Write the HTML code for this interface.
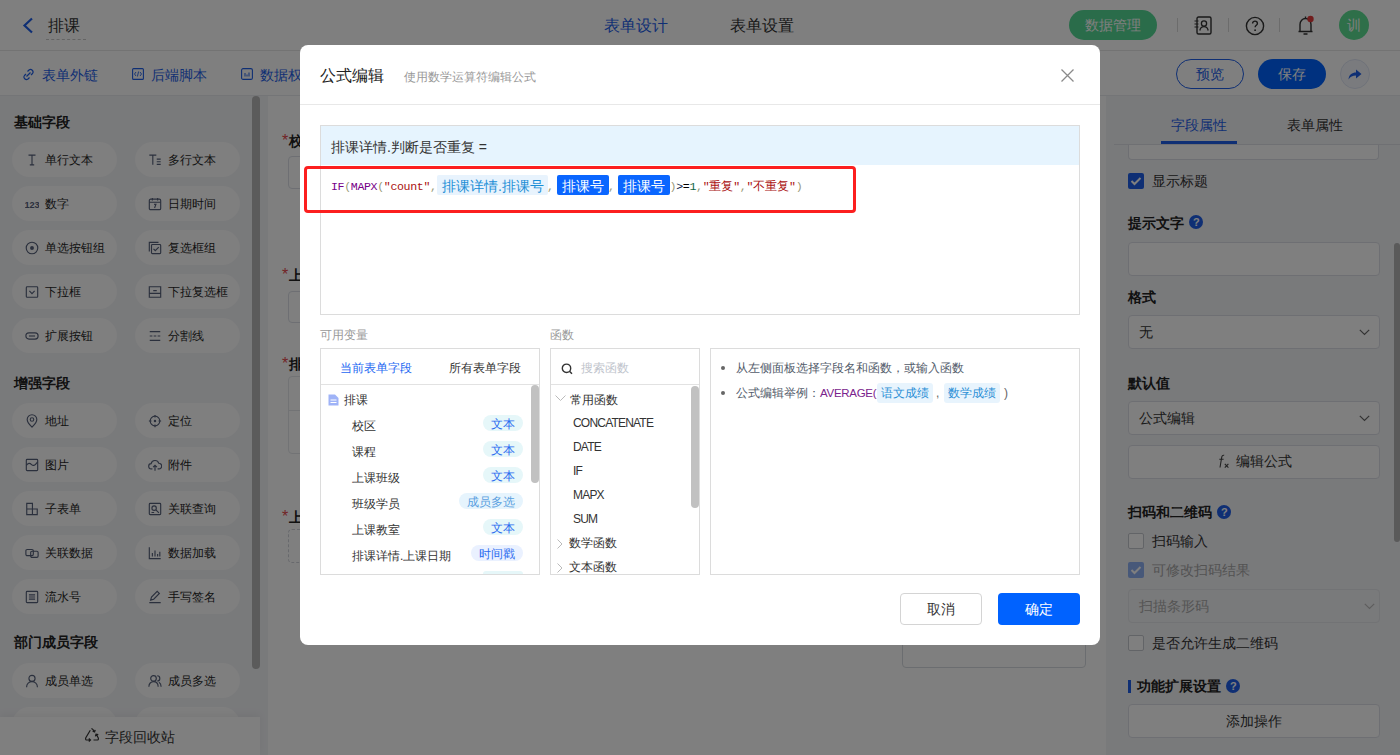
<!DOCTYPE html>
<html><head><meta charset="utf-8">
<style>
*{box-sizing:border-box;margin:0;padding:0}
html,body{width:1400px;height:755px;overflow:hidden}
body{position:relative;font-family:"Liberation Sans",sans-serif;color:#333;background:#fff;font-size:14px}
.abs{position:absolute}
.t{position:absolute;white-space:nowrap;line-height:1}
/* header */
#hdr{left:0;top:0;width:1400px;height:51px;background:#fff;border-bottom:1px solid #e6e6e6}
#tb{left:0;top:51px;width:1400px;height:44px;background:#fff;box-shadow:0 1px 2px rgba(0,0,0,.05)}
#lp{left:0;top:95px;width:268px;height:660px;background:#f3f4f7}
.pill{position:absolute;width:105px;height:35px;border-radius:18px;background:#fefefe}
.pill svg{position:absolute;left:13px;top:10.5px}
.pill span{position:absolute;left:33px;top:11px;font-size:12px;color:#262626;white-space:nowrap;line-height:15px}
.grp{position:absolute;left:14px;margin-top:-2px;font-size:14px;font-weight:bold;color:#222;line-height:16px}
#cv{left:268px;top:95px;width:838px;height:660px;background:#fff}
#rp{left:1106px;top:95px;width:294px;height:660px;background:#f3f4f7}
.inp{position:absolute;border:1px solid #dcdfe6;border-radius:4px;background:#fff}
.lbl{position:absolute;font-size:14px;font-weight:bold;color:#222;line-height:16px;white-space:nowrap}
.cb{position:absolute;width:16px;height:16px;border:1px solid #c9ccd3;border-radius:2px;background:#fff}
.qm{display:inline-block;width:14px;height:14px;border-radius:7px;background:#0a3fb5;color:#fff;font-size:11px;font-weight:bold;text-align:center;line-height:14px;vertical-align:top}
#mask{left:0;top:0;width:1400px;height:755px;background:rgba(0,0,0,.5)}
#modal{left:300px;top:45px;width:800px;height:600px;background:#fff;border-radius:8px}
</style></head><body>

<!-- ============ HEADER ============ -->
<div id="hdr" class="abs">
<svg class="abs" style="left:22px;top:17px" width="12" height="17" viewBox="0 0 12 17"><path d="M10 1.5 L2.5 8.5 L10 15.5" fill="none" stroke="#1f5fe8" stroke-width="2.2"/></svg>
<div class="t" style="left:48px;top:18px;font-size:16px;color:#333">排课</div>
<div class="abs" style="left:46px;top:39px;width:40px;border-top:1px dashed #c8c8c8"></div>
<div class="t" style="left:604px;top:18px;font-size:16px;color:#1f5fe8">表单设计</div>
<div class="t" style="left:730px;top:18px;font-size:16px;color:#333">表单设置</div>
<div class="abs" style="left:1069px;top:10px;width:88px;height:30px;border-radius:15px;background:#54d895"></div>
<div class="t" style="left:1085px;top:18px;font-size:14px;color:#fff">数据管理</div>
<div class="abs" style="left:1177px;top:18px;width:1px;height:14px;background:#d8d8d8"></div>
<div class="abs" style="left:1228px;top:18px;width:1px;height:14px;background:#d8d8d8"></div>
<div class="abs" style="left:1279px;top:18px;width:1px;height:14px;background:#d8d8d8"></div>
<svg class="abs" style="left:1193px;top:16px" width="20" height="19" viewBox="0 0 20 19"><rect x="4" y="1" width="14" height="17" rx="1.5" fill="none" stroke="#333" stroke-width="1.4"/><circle cx="11" cy="7.5" r="2.6" fill="none" stroke="#333" stroke-width="1.3"/><path d="M6.8 14.5c.6-2.6 2.2-3.8 4.2-3.8s3.6 1.2 4.2 3.8" fill="none" stroke="#333" stroke-width="1.3"/><path d="M1.5 5h4M1.5 8h4M1.5 11h4" stroke="#333" stroke-width="1.2"/></svg>
<svg class="abs" style="left:1245px;top:16px" width="20" height="20" viewBox="0 0 20 20"><circle cx="10" cy="10" r="8.6" fill="none" stroke="#333" stroke-width="1.4"/><path d="M7.6 7.6c0-1.5 1.1-2.5 2.4-2.5s2.4.9 2.4 2.3c0 1.8-2.3 2-2.3 3.9" fill="none" stroke="#333" stroke-width="1.4"/><circle cx="10.1" cy="14.2" r="0.9" fill="#333"/></svg>
<svg class="abs" style="left:1297px;top:15px" width="18" height="21" viewBox="0 0 18 21"><path d="M3 16V9.5C3 6 5.5 3.5 8.5 3.5S14 6 14 9.5V16M1.5 16.5h14M8.5 1.5v2M6.5 19h4" fill="none" stroke="#333" stroke-width="1.4"/><circle cx="13.5" cy="4" r="3.2" fill="#e23b3b"/></svg>
<div class="abs" style="left:1339px;top:10px;width:30px;height:30px;border-radius:15px;background:#5cde92"></div>
<div class="t" style="left:1347px;top:18px;font-size:14px;color:#fff">训</div>
</div>

<!-- ============ TOOLBAR ============ -->
<div id="tb" class="abs">
<svg class="abs" style="left:22px;top:17px" width="13" height="13" viewBox="0 0 13 13"><path d="M5.5 3.5l1.5-1.5a2.5 2.5 0 0 1 3.5 3.5L9 7M7.5 9.5L6 11a2.5 2.5 0 0 1-3.5-3.5L4 6M4.5 8.5l4-4" fill="none" stroke="#1f5fe8" stroke-width="1.2"/></svg>
<div class="t" style="left:42px;top:17px;font-size:14px;color:#1f5fe8">表单外链</div>
<svg class="abs" style="left:132px;top:17px" width="12" height="12" viewBox="0 0 12 12"><rect x=".6" y=".6" width="10.8" height="10.8" rx="1" fill="none" stroke="#1f5fe8" stroke-width="1.1"/><path d="M4 4L2.5 6 4 8M8 4l1.5 2L8 8M6.6 3.5L5.4 8.5" fill="none" stroke="#1f5fe8" stroke-width=".9"/></svg>
<div class="t" style="left:151px;top:17px;font-size:14px;color:#1f5fe8">后端脚本</div>
<svg class="abs" style="left:241px;top:17px" width="12" height="12" viewBox="0 0 12 12"><rect x=".6" y=".6" width="10.8" height="10.8" rx="1.5" fill="none" stroke="#1f5fe8" stroke-width="1.1"/><path d="M4 5v3.5M6 6.5v2M8 4.5v4" stroke="#1f5fe8" stroke-width="1"/></svg>
<div class="t" style="left:260px;top:17px;font-size:14px;color:#1f5fe8">数据权限</div>
<div class="abs" style="left:1176px;top:8px;width:68px;height:30px;border-radius:15px;border:1px solid #1f5fe8"></div>
<div class="t" style="left:1196px;top:16px;font-size:14px;color:#1f5fe8">预览</div>
<div class="abs" style="left:1258px;top:8px;width:68px;height:30px;border-radius:15px;background:#0062ff"></div>
<div class="t" style="left:1278px;top:16px;font-size:14px;color:#fff">保存</div>
<div class="abs" style="left:1340px;top:8px;width:30px;height:30px;border-radius:15px;border:1px solid #dfe5f3;background:#f4f7fd"></div>
<svg class="abs" style="left:1347px;top:15px" width="16" height="16" viewBox="0 0 16 16"><path d="M1.5 13.5C2 8.5 5 6.5 9 6.5V3.5l5.5 4.5L9 12.5V9.5C5.5 9.5 3.5 10.5 1.5 13.5z" fill="#1f5fe8"/></svg>
</div>

<!-- ============ LEFT PANEL ============ -->
<div id="lp" class="abs">
<div class="grp" style="top:21px">基础字段</div>
<div class="pill" style="left:12px;top:47px"><svg width="14" height="14" viewBox="0 0 16 16"><path d="M4 2.5h8M8 2.5v11M5.5 13.5h5" stroke="#56607a" stroke-width="1.3" fill="none" stroke-width="1.5"/></svg><span>单行文本</span></div>
<div class="pill" style="left:135px;top:47px"><svg width="14" height="14" viewBox="0 0 16 16"><path d="M1.5 2.5h8M5.5 2.5v11M10 7h4.5M10 10h4.5M10 13h4.5" stroke="#56607a" stroke-width="1.3" fill="none" stroke-width="1.4"/></svg><span>多行文本</span></div>
<div class="pill" style="left:12px;top:91px"><svg width="14" height="14" viewBox="0 0 16 16"><text x="-0.5" y="12" font-size="10.5" font-weight="bold" fill="#56607a" font-family="Liberation Sans" letter-spacing="-0.2">123</text></svg><span>数字</span></div>
<div class="pill" style="left:135px;top:91px"><svg width="14" height="14" viewBox="0 0 16 16"><rect x="1.5" y="2.5" width="13" height="12" rx="1.5" stroke="#56607a" stroke-width="1.3" fill="none"/><path d="M1.5 6h13M5 1v3M11 1v3M7 8.5h2l-1.5 4" stroke="#56607a" stroke-width="1.3" fill="none"/></svg><span>日期时间</span></div>
<div class="pill" style="left:12px;top:135px"><svg width="14" height="14" viewBox="0 0 16 16"><circle cx="8" cy="8" r="6.6" stroke="#56607a" stroke-width="1.3" fill="none" stroke-width="1.4"/><circle cx="8" cy="8" r="2.2" fill="#56607a"/></svg><span>单选按钮组</span></div>
<div class="pill" style="left:135px;top:135px"><svg width="14" height="14" viewBox="0 0 16 16"><path d="M1.5 12V1.5H12" stroke="#56607a" stroke-width="1.3" fill="none"/><rect x="4" y="4" width="10.5" height="10.5" rx="1" stroke="#56607a" stroke-width="1.3" fill="none"/><path d="M6.3 9l2 2 4-4" stroke="#56607a" stroke-width="1.3" fill="none"/></svg><span>复选框组</span></div>
<div class="pill" style="left:12px;top:179px"><svg width="14" height="14" viewBox="0 0 16 16"><rect x="1.5" y="2" width="13" height="12" rx="1" stroke="#56607a" stroke-width="1.3" fill="none" stroke-width="1.4"/><path d="M5 6.8l3 3 3-3" stroke="#56607a" stroke-width="1.3" fill="none"/></svg><span>下拉框</span></div>
<div class="pill" style="left:135px;top:179px"><svg width="14" height="14" viewBox="0 0 16 16"><path d="M1.5 2h13v7.5h-13zM1.5 9.5V14h13V9.5M6 6.5h4" stroke="#56607a" stroke-width="1.3" fill="none" stroke-width="1.4"/></svg><span>下拉复选框</span></div>
<div class="pill" style="left:12px;top:223px"><svg width="14" height="14" viewBox="0 0 16 16"><rect x="1" y="4.5" width="14" height="7" rx="3.5" stroke="#56607a" stroke-width="1.3" fill="none" stroke-width="1.5"/><path d="M4.5 8h7" stroke="#56607a" stroke-width="1.3" fill="none" stroke-width="1.4"/></svg><span>扩展按钮</span></div>
<div class="pill" style="left:135px;top:223px"><svg width="14" height="14" viewBox="0 0 16 16"><path d="M2 3h12M2 8h3M6.5 8h3M11 8h3M2 13h12" stroke="#56607a" stroke-width="1.3" fill="none"/></svg><span>分割线</span></div>
<div class="grp" style="top:282px">增强字段</div>
<div class="pill" style="left:12px;top:308px"><svg width="14" height="14" viewBox="0 0 16 16"><path d="M8 15S2.5 9.8 2.5 6.3a5.5 5.5 0 0 1 11 0C13.5 9.8 8 15 8 15z" stroke="#56607a" stroke-width="1.3" fill="none"/><circle cx="8" cy="6.3" r="2" stroke="#56607a" stroke-width="1.3" fill="none"/></svg><span>地址</span></div>
<div class="pill" style="left:135px;top:308px"><svg width="14" height="14" viewBox="0 0 16 16"><circle cx="8" cy="8" r="5.5" stroke="#56607a" stroke-width="1.3" fill="none"/><circle cx="8" cy="8" r="1.4" fill="#56607a"/><path d="M8 1v3M8 12v3M1 8h3M12 8h3" stroke="#56607a" stroke-width="1.3" fill="none"/></svg><span>定位</span></div>
<div class="pill" style="left:12px;top:352px"><svg width="14" height="14" viewBox="0 0 16 16"><rect x="1.5" y="1.5" width="13" height="13" rx="1" stroke="#56607a" stroke-width="1.3" fill="none"/><path d="M1.5 8.5c2-3 4-3 6 -1s4 1 7-3" stroke="#56607a" stroke-width="1.3" fill="none"/></svg><span>图片</span></div>
<div class="pill" style="left:135px;top:352px"><svg width="14" height="14" viewBox="0 0 16 16"><path d="M5 12.5H4a3 3 0 0 1-.4-6A4.5 4.5 0 0 1 12.3 6a3.2 3.2 0 0 1 .2 6.5H11M8 14.5V8.5M5.8 10.5L8 8.3l2.2 2.2" stroke="#56607a" stroke-width="1.3" fill="none"/></svg><span>附件</span></div>
<div class="pill" style="left:12px;top:396px"><svg width="14" height="14" viewBox="0 0 16 16"><path d="M2 1.5h6.5v13H2zM2 8h6.5M8.5 8h5.5v6.5H8.5" stroke="#56607a" stroke-width="1.3" fill="none"/></svg><span>子表单</span></div>
<div class="pill" style="left:135px;top:396px"><svg width="14" height="14" viewBox="0 0 16 16"><rect x="1.5" y="1.5" width="13" height="13" rx="1" stroke="#56607a" stroke-width="1.3" fill="none"/><circle cx="7" cy="7" r="2.5" stroke="#56607a" stroke-width="1.3" fill="none"/><path d="M9 9l3.5 3.5M4 12h3" stroke="#56607a" stroke-width="1.3" fill="none"/></svg><span>关联查询</span></div>
<div class="pill" style="left:12px;top:440px"><svg width="14" height="14" viewBox="0 0 16 16"><rect x="1" y="4" width="8.5" height="7" rx="1.5" stroke="#56607a" stroke-width="1.3" fill="none"/><rect x="6.5" y="6" width="8.5" height="7" rx="1.5" stroke="#56607a" stroke-width="1.3" fill="none"/></svg><span>关联数据</span></div>
<div class="pill" style="left:135px;top:440px"><svg width="14" height="14" viewBox="0 0 16 16"><path d="M1.5 1.5v13h13M5 12V8M8 12V5M11 12V9M13.5 12V6.5" stroke="#56607a" stroke-width="1.3" fill="none"/></svg><span>数据加载</span></div>
<div class="pill" style="left:12px;top:484px"><svg width="14" height="14" viewBox="0 0 16 16"><rect x="1.5" y="1.5" width="13" height="13" rx="1" stroke="#56607a" stroke-width="1.3" fill="none"/><path d="M4.5 5.5h7M4.5 8h7M4.5 10.5h7" stroke="#56607a" stroke-width="1.3" fill="none" stroke-width="1.1"/></svg><span>流水号</span></div>
<div class="pill" style="left:135px;top:484px"><svg width="14" height="14" viewBox="0 0 16 16"><path d="M3 11.5l1-3.5 6.5-6.5 2.5 2.5L6.5 10.5zM1.5 14.5h13" stroke="#56607a" stroke-width="1.3" fill="none"/></svg><span>手写签名</span></div>
<div class="grp" style="top:541px">部门成员字段</div>
<div class="pill" style="left:12px;top:568px"><svg width="14" height="14" viewBox="0 0 16 16"><circle cx="8" cy="5" r="3.5" stroke="#56607a" stroke-width="1.3" fill="none"/><path d="M1.8 15c0-4 2.8-6.3 6.2-6.3s6.2 2.3 6.2 6.3" stroke="#56607a" stroke-width="1.3" fill="none"/></svg><span>成员单选</span></div>
<div class="pill" style="left:135px;top:568px"><svg width="14" height="14" viewBox="0 0 16 16"><circle cx="6.3" cy="5" r="3.2" stroke="#56607a" stroke-width="1.3" fill="none"/><path d="M1 14.5c0-3.5 2.3-5.8 5.3-5.8s5.3 2.3 5.3 5.8M10.5 2a3 3 0 0 1 0 6M12.5 9.5c1.5.8 2.5 2.5 2.5 5" stroke="#56607a" stroke-width="1.3" fill="none"/></svg><span>成员多选</span></div>
<div class="pill" style="left:12px;top:612px"><svg width="14" height="14" viewBox="0 0 16 16"></svg><span>部门单选</span></div>
<div class="pill" style="left:135px;top:612px"><svg width="14" height="14" viewBox="0 0 16 16"></svg><span>部门多选</span></div>
<div class="abs" style="left:252px;top:1px;width:8px;height:573px;border-radius:4px;background:#b6b6b6"></div>
<div class="abs" style="left:0;top:622px;width:260px;height:38px;background:#fff;box-shadow:0 -3px 8px rgba(0,0,0,.05)"></div>
<svg class="abs" style="left:84px;top:633px" width="16" height="14" viewBox="0 0 16 14"><path d="M6.3 2.2L1.8 9.8Q1 12 3 12H6.3M4.8 10.5L6.5 12 4.8 13.5M9.5 12H13Q15 12 14.2 9.8L12.2 6.4M14.3 6.6L12 6.1 11.4 8.4M10.4 3.6L8.6 1.2Q8 0.3 7.3 1.2M8.6 3.3L10.6 3.9 11.2 1.8" stroke="#333" stroke-width="1.2" fill="none"/></svg>
<div class="t" style="left:105px;top:635px;font-size:14px;color:#333">字段回收站</div>
</div>

<!-- ============ CANVAS ============ -->
<div id="cv" class="abs">
<div class="t" style="left:14px;top:38px;font-size:16px;color:#e5484d">*</div>
<div class="t" style="left:21px;top:39px;font-size:14px;font-weight:bold;color:#222">校区</div>
<div class="abs" style="left:20px;top:61px;width:400px;height:33px;border:1px solid #dcdfe6;border-radius:4px"></div>
<div class="t" style="left:14px;top:172px;font-size:16px;color:#e5484d">*</div>
<div class="t" style="left:21px;top:173px;font-size:14px;font-weight:bold;color:#222">上课班级</div>
<div class="abs" style="left:20px;top:196px;width:400px;height:32px;border:1px solid #dcdfe6;border-radius:4px"></div>
<div class="t" style="left:14px;top:261px;font-size:16px;color:#e5484d">*</div>
<div class="t" style="left:21px;top:262px;font-size:14px;font-weight:bold;color:#222">排课详情</div>
<div class="abs" style="left:20px;top:281px;width:790px;height:78px;border:1px solid #e4e6eb;border-radius:4px"></div>
<div class="abs" style="left:20px;top:315px;width:790px;height:1px;background:#e4e6eb"></div>
<div class="t" style="left:14px;top:414px;font-size:16px;color:#e5484d">*</div>
<div class="t" style="left:21px;top:415px;font-size:14px;font-weight:bold;color:#222">上课日期</div>
<div class="abs" style="left:20px;top:434px;width:400px;height:34px;border:1px dashed #d0d3da;border-radius:4px"></div>
<div class="abs" style="left:634px;top:505px;width:184px;height:68px;border:1px solid #d7dae0;border-radius:4px"></div>
</div>

<!-- ============ RIGHT PANEL ============ -->
<div id="rp" class="abs">
<div class="t" style="left:65px;top:23px;font-size:14px;color:#1f5fe8">字段属性</div>
<div class="t" style="left:181px;top:23px;font-size:14px;color:#333">表单属性</div>
<div class="abs" style="left:8px;top:49px;width:286px;height:1px;background:#dfe1e6"></div>
<div class="abs" style="left:55px;top:46px;width:76px;height:3px;background:#1f5fe8"></div>
<div class="abs" style="left:22px;top:35px;width:251px;height:30px;border:1px solid #dcdfe6;border-top:none;border-radius:0 0 4px 4px;background:#fff;clip-path:inset(15px 0 0 0)"></div>
<div class="abs" style="left:22px;top:78px;width:16px;height:16px;border-radius:2px;background:#1f5fe8"></div><svg class="abs" style="left:22px;top:78px" width="16" height="16" viewBox="0 0 16 16"><path d="M3.5 8l3 3 6-6" stroke="#fff" stroke-width="2" fill="none"/></svg>
<div class="t" style="left:46px;top:79px;font-size:14px;color:#333">显示标题</div>
<div class="lbl" style="left:22px;top:120px">提示文字</div><div class="abs" style="left:83px;top:120px;width:14px;height:14px;border-radius:7px;background:#1f5fe8"></div><div class="t" style="left:87px;top:122px;font-size:11px;font-weight:bold;color:#fff">?</div>
<div class="inp" style="left:22px;top:147px;width:252px;height:34px"></div>
<div class="lbl" style="left:22px;top:194px">格式</div>
<div class="inp" style="left:22px;top:220px;width:252px;height:34px"></div>
<div class="t" style="left:33px;top:230px;font-size:14px;color:#333">无</div><svg class="abs" style="left:253px;top:234px" width="11" height="7" viewBox="0 0 11 7"><path d="M0.8 0.8l4.7 4.7 4.7-4.7" stroke="#666" stroke-width="1.2" fill="none"/></svg>
<div class="lbl" style="left:22px;top:280px">默认值</div>
<div class="inp" style="left:22px;top:306px;width:252px;height:34px"></div>
<div class="t" style="left:33px;top:316px;font-size:14px;color:#333">公式编辑</div><svg class="abs" style="left:253px;top:320px" width="11" height="7" viewBox="0 0 11 7"><path d="M0.8 0.8l4.7 4.7 4.7-4.7" stroke="#666" stroke-width="1.2" fill="none"/></svg>
<div class="inp" style="left:22px;top:350px;width:252px;height:34px;background:#fff"></div>
<svg class="abs" style="left:111px;top:359px" width="14" height="15" viewBox="0 0 14 15"><path d="M7.2 1.3C5.8.9 5 1.8 4.7 3.3L3 13.5M2.3 5.3h4.3" stroke="#444" stroke-width="1.1" fill="none"/><path d="M7.8 9.8l3.6 3.8M11.4 9.8l-3.6 3.8" stroke="#444" stroke-width="1.1" fill="none"/></svg>
<div class="t" style="left:130px;top:359px;font-size:14px;color:#333">编辑公式</div>
<div class="lbl" style="left:22px;top:409px">扫码和二维码</div><div class="abs" style="left:111px;top:410px;width:14px;height:14px;border-radius:7px;background:#1f5fe8"></div><div class="t" style="left:115px;top:412px;font-size:11px;font-weight:bold;color:#fff">?</div>
<div class="abs" style="left:22px;top:438px;width:16px;height:16px;border-radius:2px;border:1px solid #c5c8ce;background:#fff"></div>
<div class="t" style="left:46px;top:439px;font-size:14px;color:#333">扫码输入</div>
<div class="abs" style="left:22px;top:467px;width:16px;height:16px;border-radius:2px;background:#8fb0f2"></div><svg class="abs" style="left:22px;top:467px" width="16" height="16" viewBox="0 0 16 16"><path d="M3.5 8l3 3 6-6" stroke="#fff" stroke-width="2" fill="none"/></svg>
<div class="t" style="left:46px;top:468px;font-size:14px;color:#a6a6a6">可修改扫码结果</div>
<div class="inp" style="left:22px;top:494px;width:252px;height:34px;background:#f3f4f6;border-color:#e4e6ea"></div>
<div class="t" style="left:33px;top:504px;font-size:14px;color:#aaa">扫描条形码</div><svg class="abs" style="left:258px;top:508px" width="11" height="7" viewBox="0 0 11 7"><path d="M0.8 0.8l4.7 4.7 4.7-4.7" stroke="#bbb" stroke-width="1.2" fill="none"/></svg>
<div class="abs" style="left:22px;top:540px;width:16px;height:16px;border-radius:2px;border:1px solid #c5c8ce;background:#fff"></div>
<div class="t" style="left:46px;top:541px;font-size:14px;color:#333">是否允许生成二维码</div>
<div class="abs" style="left:22px;top:585px;width:3px;height:13px;background:#1f5fe8"></div>
<div class="lbl" style="left:31px;top:583px">功能扩展设置</div><div class="abs" style="left:120px;top:584px;width:14px;height:14px;border-radius:7px;background:#1f5fe8"></div><div class="t" style="left:124px;top:586px;font-size:11px;font-weight:bold;color:#fff">?</div>
<div class="inp" style="left:22px;top:609px;width:252px;height:34px;background:#fff"></div>
<div class="t" style="left:120px;top:619px;font-size:14px;color:#333">添加操作</div>
<div class="abs" style="left:288px;top:148px;width:6px;height:299px;border-radius:3px;background:#b4b4b4"></div>
</div>

<div class="abs" style="left:0;top:95px;width:1400px;height:1px;background:#e9ebef"></div>
<div id="mask" class="abs"></div>

<!-- ============ MODAL ============ -->
<div id="modal" class="abs">
<div class="t" style="left:20px;top:23px;font-size:16px;color:#222">公式编辑</div>
<div class="t" style="left:104px;top:26px;font-size:12px;color:#999">使用数学运算符编辑公式</div>
<svg class="abs" style="left:760px;top:23px" width="15" height="15" viewBox="0 0 15 15"><path d="M1.5 1.5l12 12M13.5 1.5l-12 12" stroke="#8a8a8a" stroke-width="1.3"/></svg>
<div class="abs" style="left:0px;top:59px;width:800px;height:1px;background:#e8e8e8"></div>
<div class="abs" style="left:20px;top:80px;width:760px;height:190px;border:1px solid #dcdcdc"></div>
<div class="abs" style="left:21px;top:81px;width:758px;height:39px;background:#e6f4fe"></div>
<div class="t" style="left:31px;top:95px;font-size:14px;color:#333">排课详情.判断是否重复 =</div>
<div class="t" style="left:31px;top:136px;font-family:'Liberation Mono',monospace;font-size:11.6px;letter-spacing:-0.36px;color:#997"><span style="color:#708">IF</span>(<span style="color:#708">MAPX</span>(<span style="color:#a11">"count"</span>,</div>
<div class="abs" style="left:137px;top:130px;width:111px;height:20px;border-radius:2px;background:#e8f3fd"></div>
<div class="t" style="left:142px;top:134px;font-size:14px;color:#1a8ed6">排课详情.排课号</div>
<div class="t" style="left:247px;top:136px;font-family:'Liberation Mono',monospace;font-size:11.6px;letter-spacing:-0.36px;color:#997">,</div>
<div class="abs" style="left:257px;top:130px;width:52px;height:20px;border-radius:2px;background:#0a66ff"></div>
<div class="t" style="left:262px;top:134px;font-size:14px;color:#fff">排课号</div>
<div class="t" style="left:308px;top:136px;font-family:'Liberation Mono',monospace;font-size:11.6px;letter-spacing:-0.36px;color:#997">,</div>
<div class="abs" style="left:318px;top:130px;width:52px;height:20px;border-radius:2px;background:#0a66ff"></div>
<div class="t" style="left:323px;top:134px;font-size:14px;color:#fff">排课号</div>
<div class="t" style="left:369.6px;top:136px;font-family:'Liberation Mono',monospace;font-size:11.6px;letter-spacing:-0.36px;color:#997">)<span style="color:#0b1a4a">&gt;</span><span style="color:#000">=</span><span style="color:#164">1</span>,<span style="color:#a11">"<span style="font-size:12px;letter-spacing:0">重复</span>"</span>,<span style="color:#a11">"<span style="font-size:12px;letter-spacing:0">不重复</span>"</span>)</div>
<div class="abs" style="left:4px;top:121px;width:552px;height:47px;border:3px solid #fc1f1f;border-radius:4px"></div>
<div class="t" style="left:20px;top:284px;font-size:12px;color:#999">可用变量</div>
<div class="t" style="left:250px;top:284px;font-size:12px;color:#999">函数</div>
<div class="abs" style="left:20px;top:303px;width:220px;height:227px;border:1px solid #dcdcdc;overflow:hidden"><div class="abs" style="left:0;top:35px;width:218px;height:1px;background:#e2e2e2"></div><div class="t" style="left:19px;top:13px;font-size:12px;color:#2468f2">当前表单字段</div><div class="t" style="left:128px;top:13px;font-size:12px;color:#333">所有表单字段</div><svg class="abs" style="left:7px;top:45px" width="11" height="12" viewBox="0 0 11 12"><path d="M0.5 0.5h6.5l3.5 3.5v7.5H0.5z" fill="#9fb3f7"/><path d="M2.5 6h6M2.5 8.5h6" stroke="#fff" stroke-width="1"/></svg><div class="t" style="left:23px;top:45px;font-size:12px;color:#333">排课</div></div>
<div class="t" style="left:52px;top:375px;font-size:12px;color:#333">校区</div>
<div class="abs" style="left:183px;top:370px;width:40px;height:16px;border-radius:8px;background:#e6f7f9"></div>
<div class="t" style="left:191px;top:373px;font-size:12px;color:#2b6cf0">文本</div>
<div class="t" style="left:52px;top:401px;font-size:12px;color:#333">课程</div>
<div class="abs" style="left:183px;top:396px;width:40px;height:16px;border-radius:8px;background:#e6f7f9"></div>
<div class="t" style="left:191px;top:399px;font-size:12px;color:#2b6cf0">文本</div>
<div class="t" style="left:52px;top:427px;font-size:12px;color:#333">上课班级</div>
<div class="abs" style="left:183px;top:422px;width:40px;height:16px;border-radius:8px;background:#e6f7f9"></div>
<div class="t" style="left:191px;top:425px;font-size:12px;color:#2b6cf0">文本</div>
<div class="t" style="left:52px;top:453px;font-size:12px;color:#333">班级学员</div>
<div class="abs" style="left:159px;top:448px;width:64px;height:16px;border-radius:8px;background:#e6f4fd"></div>
<div class="t" style="left:167px;top:451px;font-size:12px;color:#5a9fe0">成员多选</div>
<div class="t" style="left:52px;top:479px;font-size:12px;color:#333">上课教室</div>
<div class="abs" style="left:183px;top:474px;width:40px;height:16px;border-radius:8px;background:#e6f7f9"></div>
<div class="t" style="left:191px;top:477px;font-size:12px;color:#2b6cf0">文本</div>
<div class="t" style="left:52px;top:505px;font-size:12px;color:#333">排课详情.上课日期</div>
<div class="abs" style="left:171px;top:500px;width:52px;height:16px;border-radius:8px;background:#eaf1ff"></div>
<div class="t" style="left:179px;top:503px;font-size:12px;color:#2b6cf0">时间戳</div>
<div class="abs" style="left:183px;top:526px;width:40px;height:3px;border-radius:8px 8px 0 0;background:#e6f7f9"></div>
<div class="abs" style="left:231px;top:340px;width:8px;height:98px;border-radius:4px;background:#c1c1c1"></div>
<div class="abs" style="left:250px;top:303px;width:150px;height:227px;border:1px solid #dcdcdc;overflow:hidden"><div class="abs" style="left:0;top:35px;width:148px;height:1px;background:#e2e2e2"></div><svg class="abs" style="left:10px;top:14px" width="13" height="12" viewBox="0 0 13 12"><circle cx="5.5" cy="5.3" r="4.2" stroke="#333" stroke-width="1.4" fill="none"/><path d="M8.5 8.3l2.5 2.5" stroke="#333" stroke-width="1.5"/></svg><div class="t" style="left:30px;top:13px;font-size:12px;color:#c0c4cc">搜索函数</div><svg class="abs" style="left:4px;top:46px" width="11" height="7" viewBox="0 0 11 7"><path d="M0.5 0.5l5 5 5-5" stroke="#bbb" stroke-width="1" fill="none"/></svg><div class="t" style="left:19px;top:45px;font-size:12px;color:#333">常用函数</div></div>
<div class="t" style="left:273px;top:372px;font-size:12px;letter-spacing:-0.8px;color:#333">CONCATENATE</div>
<div class="t" style="left:273px;top:396px;font-size:12px;letter-spacing:-0.8px;color:#333">DATE</div>
<div class="t" style="left:273px;top:420px;font-size:12px;letter-spacing:-0.8px;color:#333">IF</div>
<div class="t" style="left:273px;top:444px;font-size:12px;letter-spacing:-0.8px;color:#333">MAPX</div>
<div class="t" style="left:273px;top:468px;font-size:12px;letter-spacing:-0.8px;color:#333">SUM</div>
<svg class="abs" style="left:257px;top:494px" width="6" height="10" viewBox="0 0 6 10"><path d="M0.5 0.5l4.5 4.5-4.5 4.5" stroke="#bbb" stroke-width="1" fill="none"/></svg>
<div class="t" style="left:269px;top:492px;font-size:12px;color:#333">数学函数</div>
<svg class="abs" style="left:257px;top:518px" width="6" height="10" viewBox="0 0 6 10"><path d="M0.5 0.5l4.5 4.5-4.5 4.5" stroke="#bbb" stroke-width="1" fill="none"/></svg>
<div class="t" style="left:269px;top:516px;font-size:12px;color:#333">文本函数</div>
<div class="abs" style="left:391px;top:341px;width:8px;height:122px;border-radius:4px;background:#c1c1c1"></div>
<div class="abs" style="left:410px;top:303px;width:370px;height:227px;border:1px solid #dcdcdc"></div>
<div class="abs" style="left:421px;top:321px;width:4px;height:4px;border-radius:2px;background:#666"></div>
<div class="t" style="left:436px;top:317px;font-size:12px;color:#535c6b">从左侧面板选择字段名和函数，或输入函数</div>
<div class="abs" style="left:421px;top:346px;width:4px;height:4px;border-radius:2px;background:#666"></div>
<div class="t" style="left:436px;top:342px;font-size:12px;color:#535c6b">公式编辑举例：</div>
<div class="t" style="left:520px;top:343px;font-size:11.5px;letter-spacing:-0.3px;color:#7a228c">AVERAGE(</div>
<div class="abs" style="left:577px;top:338px;width:56px;height:20px;border-radius:3px;background:#e8f4fd"></div>
<div class="t" style="left:581px;top:342px;font-size:12px;color:#2b8fd6">语文成绩</div>
<div class="t" style="left:636px;top:342px;font-size:12px;color:#666">,</div>
<div class="abs" style="left:644px;top:338px;width:56px;height:20px;border-radius:3px;background:#e8f4fd"></div>
<div class="t" style="left:648px;top:342px;font-size:12px;color:#2b8fd6">数学成绩</div>
<div class="t" style="left:704px;top:342px;font-size:12px;color:#666">)</div>
<div class="abs" style="left:600px;top:548px;width:82px;height:32px;border:1px solid #d4d4d4;border-radius:4px;background:#fff"></div>
<div class="t" style="left:627px;top:557px;font-size:14px;color:#333">取消</div>
<div class="abs" style="left:698px;top:548px;width:82px;height:32px;border-radius:4px;background:#0062ff"></div>
<div class="t" style="left:725px;top:557px;font-size:14px;color:#fff">确定</div>
</div>

</body></html>
